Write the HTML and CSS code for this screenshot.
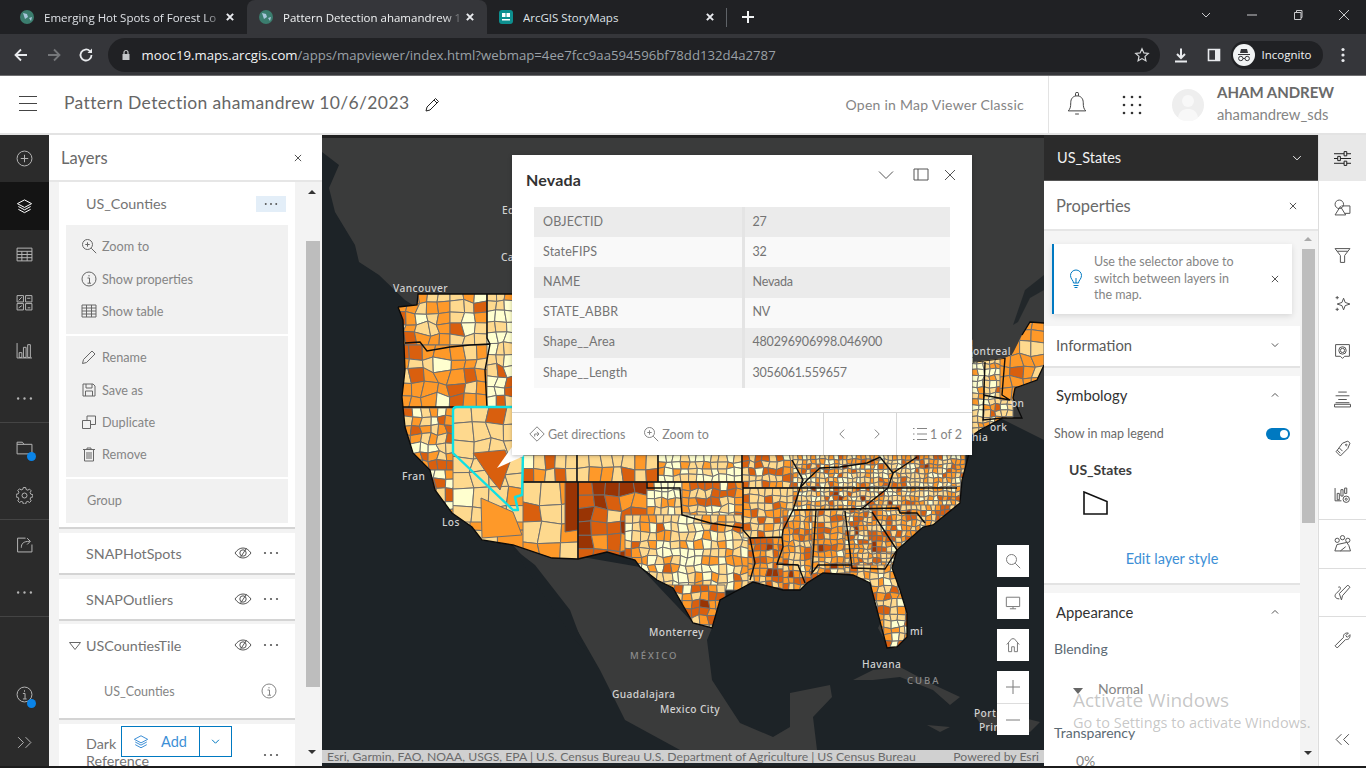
FILE: index.html
```html
<!DOCTYPE html>
<html lang="en">
<head>
  <meta charset="UTF-8">
  <meta name="viewport" content="width=device-width, initial-scale=1">
  <title>Pattern Detection ahamandrew 10/6/2023</title>
  <link rel="stylesheet" href="styles.css">
</head>
<body>
  <!-- Icon sprite -->
  <svg class="sprite" width="0" height="0">
    <symbol id="i-x" viewBox="0 0 16 16"><path d="M3 3l10 10M13 3L3 13"/></symbol>
    <symbol id="i-down" viewBox="0 0 16 16"><path d="M3 5.500l5 5 5-5"/></symbol>
    <symbol id="i-up" viewBox="0 0 16 16"><path d="M3 10.500l5-5 5 5"/></symbol>
    <symbol id="i-dots" viewBox="0 0 16 16"><circle cx="2" cy="8" r="1.100" class="solid"/><circle cx="8" cy="8" r="1.100" class="solid"/><circle cx="14" cy="8" r="1.100" class="solid"/></symbol>
    <symbol id="i-eye" viewBox="0 0 18 16"><path d="M1 8c2.500-3.500 5-5 8-5s5.500 1.500 8 5c-2.500 3.500-5 5-8 5s-5.500-1.500-8-5z"/><circle cx="9" cy="8" r="3.200"/><path d="M12.500 3.200L6 13"/></symbol>
    <symbol id="i-layers" viewBox="0 0 18 18"><path d="M9 2l7.500 4L9 10 1.500 6zM2.500 9L9 12.500 15.500 9M2.500 12L9 15.500l6.500-3.500"/></symbol>
    <symbol id="i-zoom" viewBox="0 0 16 16"><circle cx="6.500" cy="6.500" r="5"/><path d="M4.300 6.500h4.400M6.500 4.300v4.400M10.200 10.200l5 5"/></symbol>
    <symbol id="i-info" viewBox="0 0 16 16"><circle cx="8" cy="8" r="7"/><path d="M6.500 7h2v5M6.500 12.200h3.500M8 4v1.400"/></symbol>
  </svg>

  <!-- Browser chrome -->
  <div class="tabbar">
    <div class="tab tab-first">
      <svg class="favicon" viewBox="0 0 16 16"><circle cx="8" cy="8" r="7" fill="#3b7d6e"/><path d="M4 4l4 1 1 3-3 2zM10 9l3-1-1 4z" fill="#a7c6da"/></svg>
      <span class="tab-text">Emerging Hot Spots of Forest Lo</span>
      <svg class="tab-close icon"><use href="#i-x"/></svg>
    </div>
    <div class="tab tab-active">
      <svg class="favicon" viewBox="0 0 16 16"><circle cx="8" cy="8" r="7" fill="#3b7d6e"/><path d="M4 4l4 1 1 3-3 2zM10 9l3-1-1 4z" fill="#a7c6da"/></svg>
      <span class="tab-text">Pattern Detection ahamandrew 1</span>
      <svg class="tab-close icon"><use href="#i-x"/></svg>
    </div>
    <div class="tab tab-last">
      <svg class="favicon" viewBox="0 0 16 16"><rect x="1" y="1" width="14" height="14" rx="3" fill="#0d8f8f"/><path d="M4 4h3.500v4H4zM8.500 4H12v4H8.500zM4 10h8v1.500H4z" fill="#fff"/></svg>
      <span class="tab-text">ArcGIS StoryMaps</span>
      <svg class="tab-close icon"><use href="#i-x"/></svg>
    </div>
    <svg class="tab-plus" viewBox="0 0 14 14"><path d="M7 1v12M1 7h12"/></svg>
    <div class="win-controls">
      <svg viewBox="0 0 12 12"><path d="M2 4l4 4 4-4"/></svg>
      <svg viewBox="0 0 12 12"><path d="M1 6h10"/></svg>
      <svg viewBox="0 0 12 12"><path d="M2.500 3.500h6.500v7H2.500zM4.500 3.500V1.500h5.500v7H9"/></svg>
      <svg viewBox="0 0 12 12"><path d="M1 1l10 10M11 1L1 11"/></svg>
    </div>
  </div>
  <div class="toolbar">
    <svg class="nav-btn" viewBox="0 0 16 16"><path d="M14 8H2.500M8 2.500L2.500 8 8 13.500"/></svg>
    <svg class="nav-btn nav-dim" viewBox="0 0 16 16"><path d="M2 8h11.500M8 2.500L13.500 8 8 13.500"/></svg>
    <svg class="nav-btn" viewBox="0 0 16 16"><path d="M13.500 8a5.500 5.500 0 1 1-1.600-3.900"/><path class="solid" d="M14 1.500V6H9.500z"/></svg>
    <div class="urlbar">
      <svg class="lock" viewBox="0 0 12 12"><path d="M2.500 5h7v6h-7z" fill="#c4c7c9" stroke="none"/><path d="M4 5V3.500a2 2 0 0 1 4 0V5" fill="none" stroke="#c4c7c9" stroke-width="1.200"/></svg>
      <span class="url"><b>mooc19.maps.arcgis.com</b>/apps/mapviewer/index.html?webmap=4ee7fcc9aa594596bf78dd132d4a2787</span>
      <svg class="star" viewBox="0 0 16 16"><path d="M8 1.800l1.900 4.100 4.400.5-3.300 3 .9 4.400L8 11.600l-3.900 2.200.9-4.400-3.300-3 4.400-.5z"/></svg>
    </div>
    <svg class="tool-btn" viewBox="0 0 16 16"><path d="M8 1.500v9M4 7l4 4 4-4M2 14.500h12" stroke-width="2"/></svg>
    <svg class="tool-btn" viewBox="0 0 16 16"><path d="M2.500 2.500h11v11h-11z" stroke-width="1.600"/><path class="solid" d="M9 2.500h4.500v11H9z"/></svg>
    <div class="incognito">
      <svg viewBox="0 0 22 22"><circle cx="11" cy="11" r="11" fill="#f1f3f4"/><path d="M5 10h12v1H5zM7 9l1-4h6l1 4z" fill="#35363a"/><circle cx="7.800" cy="14.500" r="2.200" fill="none" stroke="#35363a"/><circle cx="14.200" cy="14.500" r="2.200" fill="none" stroke="#35363a"/><path d="M10 14.500h2" stroke="#35363a"/></svg>
      <span>Incognito</span>
    </div>
    <svg class="more-btn" viewBox="0 0 4 16"><circle cx="2" cy="2.500" r="1.600"/><circle cx="2" cy="8" r="1.600"/><circle cx="2" cy="13.500" r="1.600"/></svg>
  </div>

  <!-- App header -->
  <header class="app-header">
    <div class="hamburger"><span></span><span></span><span></span></div>
    <div class="map-title">Pattern Detection ahamandrew 10/6/2023</div>
    <svg class="icon title-pencil" viewBox="0 0 16 16"><path d="M2 14l1-4 8.500-8.500 3 3L6 13zM10 3l3 3"/></svg>
    <a class="classic-link">Open in Map Viewer Classic</a>
    <div class="header-user">
      <svg class="icon bell" viewBox="2 2 16 19"><path d="M3 17c1.500-1.500 2-3 2-6.500C5 7 7 5 10 5s5 2 5 5.500c0 3.500.5 5 2 6.500zM8.800 5V3.300a1.200 1.200 0 0 1 2.400 0V5M8.500 19.500h3"/></svg>
      <svg class="apps" viewBox="0 0 20 20"><g><circle cx="2" cy="2" r="1.300"/><circle cx="10" cy="2" r="1.300"/><circle cx="18" cy="2" r="1.300"/><circle cx="2" cy="10" r="1.300"/><circle cx="10" cy="10" r="1.300"/><circle cx="18" cy="10" r="1.300"/><circle cx="2" cy="18" r="1.300"/><circle cx="10" cy="18" r="1.300"/><circle cx="18" cy="18" r="1.300"/></g></svg>
      <svg class="avatar" viewBox="0 0 32 32"><circle cx="16" cy="16" r="16" fill="#eeeeee"/><circle cx="16" cy="12" r="6" fill="#f8f8f8"/><path d="M6 29c1-7 5-9 10-9s9 2 10 9a16 16 0 0 1-20 0z" fill="#f8f8f8"/></svg>
      <div class="user-names">
        <div class="user-full">AHAM ANDREW</div>
        <div class="user-id">ahamandrew_sds</div>
      </div>
    </div>
  </header>

  <main class="workspace">
    <!-- Left rail -->
    <nav class="rail">
      <div class="rail-item rail-top"><svg class="icon" viewBox="0 0 16 16"><circle cx="8" cy="8" r="7"/><path d="M4.500 8h7M8 4.500v7"/></svg></div>
      <div class="rail-item rail-active"><svg class="icon"><use href="#i-layers"/></svg></div>
      <div class="rail-item"><svg class="icon" viewBox="0 0 16 16"><path d="M1 2h14v12H1zM1 5h14M1 8h14M1 11h14M5.500 5v9M10.500 5v9"/></svg></div>
      <div class="rail-item"><svg class="icon" viewBox="0 0 16 16"><path d="M1 1.500h6v6H1zM9 1.500h6v6H9zM1 9h6v6H1zM9 9h6v6H9zM2.500 6l3-3M10.500 4h3M2.500 13l3-2M11 13h2.500"/></svg></div>
      <div class="rail-item"><svg class="icon" viewBox="0 0 16 16"><path d="M1 1v14h14M3 10h2.500v4.500H3zM7 5h2.500v9.500H7zM11 2.500h2.500v12H11z"/></svg></div>
      <div class="rail-item rail-sep"><svg class="icon"><use href="#i-dots"/></svg></div>
      <div class="rail-item"><svg class="icon" viewBox="0 0 16 16"><path d="M1 3h5l1.500 2H15v9H1zM1 5h6.500"/></svg><i class="rail-dot"></i></div>
      <div class="rail-item rail-sep"><svg class="icon" viewBox="-.5 -.5 17 17"><circle cx="8" cy="8" r="2.500"/><path d="M6.800 0h2.400l.4 2 1.700.7 1.700-1.100 1.700 1.700-1.100 1.700.7 1.700 2 .4v2.400l-2 .4-.7 1.700 1.100 1.700-1.700 1.700-1.700-1.100-1.700.7-.4 2H6.800l-.4-2-1.700-.7-1.700 1.100-1.700-1.700 1.100-1.700-.7-1.700-2-.4V6.800l2-.4.7-1.700-1.100-1.700 1.700-1.700 1.700 1.100 1.700-.7z"/></svg></div>
      <div class="rail-item"><svg class="icon" viewBox="0 0 16 16"><path d="M9 2H1.500v13H15V8M5 11c0-4 2-6 8-6M10.500 2L13.500 5l-3 3"/></svg></div>
      <div class="rail-item rail-sep"><svg class="icon"><use href="#i-dots"/></svg></div>
      <div class="rail-spacer"></div>
      <div class="rail-item"><svg class="icon"><use href="#i-info"/></svg><i class="rail-dot"></i></div>
      <div class="rail-item"><svg class="icon" viewBox="0 0 16 16"><path d="M2 3l5 5-5 5M9 3l5 5-5 5"/></svg></div>
    </nav>

    <!-- Layers panel -->
    <section class="layers-panel">
      <div class="panel-head">
        <h2>Layers</h2>
        <svg class="icon panel-close"><use href="#i-x"/></svg>
      </div>
      <div class="layers-body">
        <div class="layers-list">
          <div class="layer layer-open">
            <div class="layer-row">
              <span class="layer-name">US_Counties</span>
              <span class="dots-btn"><svg class="icon"><use href="#i-dots"/></svg></span>
            </div>
            <div class="menu-group">
              <div class="menu-row"><svg class="icon"><use href="#i-zoom"/></svg>Zoom to</div>
              <div class="menu-row"><svg class="icon"><use href="#i-info"/></svg>Show properties</div>
              <div class="menu-row"><svg class="icon" viewBox="0 0 16 16"><path d="M1 2h14v12H1zM1 5h14M1 8h14M1 11h14M5.500 2v12M10.500 2v12"/></svg>Show table</div>
            </div>
            <div class="menu-group menu-group-2">
              <div class="menu-row"><svg class="icon" viewBox="0 0 16 16"><path d="M1.500 14.500l1-4 8.500-8.500 3 3-8.500 8.500z"/></svg>Rename</div>
              <div class="menu-row"><svg class="icon" viewBox="0 0 16 16"><path d="M2 2h10l2 2v10H2zM5 2v4h6V2M4.500 14V9h7v5"/></svg>Save as</div>
              <div class="menu-row"><svg class="icon" viewBox="0 0 16 16"><path d="M1.500 6.500h8v8h-8zM6 6.500V2h8.500v8.500H9.500"/></svg>Duplicate</div>
              <div class="menu-row"><svg class="icon" viewBox="0 0 16 16"><path d="M2 3.500h12M6 3.500V2h4v1.500M3.500 3.500h9V15h-9zM6 6v7M8 6v7M10 6v7"/></svg>Remove</div>
            </div>
            <div class="menu-group menu-group-3">Group</div>
          </div>
          <div class="layer layer-short">
            <span class="layer-name">SNAPHotSpots</span>
            <svg class="icon eye"><use href="#i-eye"/></svg>
            <svg class="icon dots"><use href="#i-dots"/></svg>
          </div>
          <div class="layer layer-short">
            <span class="layer-name">SNAPOutliers</span>
            <svg class="icon eye"><use href="#i-eye"/></svg>
            <svg class="icon dots"><use href="#i-dots"/></svg>
          </div>
          <div class="layer layer-group">
            <div class="layer-short">
              <svg class="icon caret" viewBox="0 0 14 10"><path d="M1.500 1.500h11L7 8.500z"/></svg>
              <span class="layer-name">USCountiesTile</span>
              <svg class="icon eye"><use href="#i-eye"/></svg>
              <svg class="icon dots"><use href="#i-dots"/></svg>
            </div>
            <div class="sublayer">
              <span>US_Counties</span>
              <svg class="icon"><use href="#i-info"/></svg>
            </div>
          </div>
          <div class="layer layer-last">
            <span class="layer-name">Dark<br>Reference</span>
            <svg class="icon dots"><use href="#i-dots"/></svg>
          </div>
        </div>
        <div class="scrollbar scrollbar-left"><i class="arrow-up"></i><i class="thumb"></i><i class="arrow-down"></i></div>
        <div class="add-btn">
          <span class="add-main"><svg class="icon"><use href="#i-layers"/></svg>Add</span>
          <span class="add-more"><svg class="icon"><use href="#i-down"/></svg></span>
        </div>
      </div>
    </section>

    <!-- Map -->
    <section class="map">
      <svg class="map-svg" viewBox="322 135 722 631" id="mapSvg">
        <defs>
          <clipPath id="usClip"><path id="usShape" d="M398 307L417 305L418 294L512 294L972 310L973 362L1005 358L1012 355L1022 335L1030 322L1044 323L1044 365L1037 380L1015 388L1013 398L1022 418L1003 418L980 430L970 437L970 450L962 480L960 503L933 525L923 527L897 550L892 568L900 590L907 613L907 637L897 647L887 648L877 610L870 583L853 575L823 573L807 583L800 590L783 590L753 582L720 600L712 628L693 623L673 588L657 580L640 567L635 560L607 552L578 559L552 558L513 545L482 540L472 527L452 513L435 490L430 470L413 453L405 427L402 397L405 370L403 320Z"/></clipPath>
        </defs>
        <rect x="322" y="135" width="722" height="631" fill="#1d2327"/>
        <rect x="322" y="135" width="722" height="3" fill="#202020"/>
        <!-- land -->
        <path class="land" d="M322 138L1044 138L1044 440L1000 418L960 440L880 500L820 570L405 300L379 275L359 262L355 245L335 212L329 188L339 165L322 152Z"/>
        <path class="water-inlet" d="M1044 275L1025 290L1013 325L1018 322L1030 298L1044 290Z"/>
        <path class="land" d="M513 545L640 567L693 623L712 628L707 640L712 680L740 723L773 737L790 727L790 693L830 685L832 697L813 717L817 750L680 750L625 720L600 670L560 600Z"/>
        <path class="water" d="M513 548L540 590L575 640L585 650L570 610L535 565Z"/>
        <path class="land" d="M853 680L873 670L900 667L930 683L960 697L950 705L933 690L900 677L873 680ZM927 725L950 727L940 732ZM973 713L1000 712L1040 722L1030 732L985 730ZM883 618L890 630L885 640L878 628Z"/>
        <!-- county choropleth, filled in by map.js -->
        <g id="counties" clip-path="url(#usClip)"></g>
        <!-- state lines -->
        <g class="states" clip-path="url(#usClip)">
          <path d="M405 343L420 342L427 351L450 347L470 345L490 344M487 294L487 338L490 344L485 370L487 408M403 407L512 407"/>
          <path d="M523 482L658 482M577 455L577 482M578 482L578 559M647 482L647 488L680 488L682 515L710 523L743 528M658 455L658 482M658 482L742 482L742 455M743 482L743 530L750 538L755 563L750 580"/>
          <path d="M743 488L800 488L793 510L783 530L782 537L750 538M782 537L783 547L777 564L798 565L805 583M792 460L803 480L800 488M800 488L957 488M793 510L898 508L900 513L917 513L925 523M816 510L812 573L818 565L852 565M845 511L852 568L885 569L897 550M872 512L897 550M888 488L860 510M800 488L807 480L820 468L840 467L867 463L880 457L893 473L888 488M917 457L893 473"/>
          <path d="M973 362L1005 358L1002 395L1010 400M985 362L983 420L1003 418M983 395L1010 400"/>
        </g>
        <path class="us-edge" d="M398 307L417 305L418 294L512 294M1022 335L1030 322L1044 323M1044 365L1037 380L1015 388L1013 398L1022 418L1003 418L980 430L970 437M970 450L962 480L960 503L933 525L923 527L897 550L892 568L900 590L907 613L907 637L897 647L887 648L877 610L870 583L853 575L823 573L807 583L800 590L783 590L753 582L720 600L712 628L693 623L673 588L657 580L640 567L635 560L607 552L578 559L552 558L513 545L482 540L472 527L452 513L435 490L430 470L413 453L405 427L402 397L405 370L403 320L398 307"/>
        <!-- selected state -->
        <path class="selected" d="M512 407L457 407Q453 407 453 411L453 453L513 510L518 510L515 497L522 495L523 453"/>
        <polygon class="popup-tail" points="512,447 524,456 497,468"/>
        <!-- labels -->
        <g class="labels">
          <text x="393" y="292">Vancouver</text>
          <text x="502" y="214">Ed</text>
          <text x="501" y="261">Cal</text>
          <text x="402" y="480">Fran</text>
          <text x="442" y="526">Los</text>
          <text x="649" y="636">Monterrey</text>
          <text x="612" y="698">Guadalajara</text>
          <text x="660" y="713">Mexico City</text>
          <text x="862" y="668">Havana</text>
          <text x="910" y="635">mi</text>
          <text x="974" y="717">Port</text>
          <text x="979" y="731">Prin</text>
          <text x="973" y="355">ontreal</text>
          <text x="1011" y="407">on</text>
          <text x="990" y="431">ork</text>
          <text x="972" y="441">hia</text>
          <text class="dim" x="630" y="659">MÉXICO</text>
          <text class="dim" x="907" y="684">CUBA</text>
        </g>
      </svg>

      <div class="map-tools">
        <div class="map-tool"><svg class="icon" viewBox="0 0 16 16"><circle cx="6.500" cy="6.500" r="5"/><path d="M10.200 10.200l5 5"/></svg></div>
        <div class="map-tool"><svg class="icon" viewBox="0 0 18 16"><path d="M1.500 1.500h15v10.500h-15zM9 12v2.500M5.500 14.500h7"/></svg></div>
        <div class="map-tool"><svg class="icon" viewBox="0 0 16 18"><path d="M1 8.500L6.500 2h3L15 8.500M3 6.500V16.500h3.500V11h3v5.500H13V6.500"/></svg></div>
        <div class="map-zoom">
          <div class="map-tool"><svg class="icon" viewBox="0 0 16 16"><path d="M8 1v14M1 8h14"/></svg></div>
          <div class="map-tool"><svg class="icon" viewBox="0 0 16 16"><path d="M1 8h14"/></svg></div>
        </div>
      </div>

      <!-- Feature popup -->
      <div class="popup">
        <div class="popup-head">
          <h3>Nevada</h3>
          <svg class="icon popup-collapse" viewBox="0 0 16 16"><path d="M1 4.500l7 7 7-7"/></svg>
          <svg class="icon" viewBox="0 0 16 16"><path d="M1 2h14v11H1zM5 2v11"/></svg>
          <svg class="icon"><use href="#i-x"/></svg>
        </div>
        <table class="popup-table">
          <tr><th>OBJECTID</th><td>27</td></tr>
          <tr><th>StateFIPS</th><td>32</td></tr>
          <tr><th>NAME</th><td>Nevada</td></tr>
          <tr><th>STATE_ABBR</th><td>NV</td></tr>
          <tr><th>Shape__Area</th><td>480296906998.046900</td></tr>
          <tr><th>Shape__Length</th><td>3056061.559657</td></tr>
        </table>
        <div class="popup-foot">
          <div class="foot-actions">
            <span><svg class="icon" viewBox="0 0 16 16"><path d="M8 .8L15.200 8 8 15.200.8 8zM5.700 10.500V8h4M8 5.800L10 8l-2 2"/></svg>Get directions</span>
            <span><svg class="icon"><use href="#i-zoom"/></svg>Zoom to</span>
          </div>
          <div class="foot-nav">
            <svg class="icon" viewBox="0 0 16 16"><path d="M10.500 3l-5 5 5 5"/></svg>
            <svg class="icon" viewBox="0 0 16 16"><path d="M5.500 3l5 5-5 5"/></svg>
          </div>
          <div class="foot-count">
            <svg class="icon" viewBox="0 0 16 16"><path d="M5 2.500h10M5 8h10M5 13.500h10M1 2.500h1.500M1 8h1.500M1 13.500h1.500"/></svg>1 of 2
          </div>
        </div>
      </div>

      <div class="attribution">
        <span>Esri, Garmin, FAO, NOAA, USGS, EPA | U.S. Census Bureau U.S. Department of Agriculture | US Census Bureau</span>
        <span>Powered by Esri</span>
      </div>
    </section>

    <!-- Properties panel -->
    <section class="props-panel">
      <div class="layer-picker">
        <span>US_States</span>
        <svg class="icon"><use href="#i-down"/></svg>
      </div>
      <div class="panel-head props-head">
        <h2>Properties</h2>
        <svg class="icon panel-close"><use href="#i-x"/></svg>
      </div>
      <div class="props-body">
        <div class="props-scroll">
          <div class="notice">
            <svg class="icon" viewBox="0 0 16 20"><path d="M5.500 14c0-2.500-3-4-3-7.500a5.500 5.500 0 0 1 11 0c0 3.500-3 5-3 7.500zM5.500 16.500h5M6.500 18.500h3M8 14V9"/></svg>
            <p>Use the selector above to switch between layers in the map.</p>
            <svg class="icon notice-x"><use href="#i-x"/></svg>
          </div>
          <div class="card card-info">
            <div class="card-head"><span class="card-title-soft">Information</span><svg class="icon"><use href="#i-down"/></svg></div>
          </div>
          <div class="card card-symbology">
            <div class="card-head"><span>Symbology</span><svg class="icon"><use href="#i-up"/></svg></div>
            <div class="legend-row"><span>Show in map legend</span><i class="toggle"></i></div>
            <div class="legend-name">US_States</div>
            <svg class="legend-swatch" viewBox="0 0 26 26"><path d="M1 1L24 10.500V23H1z"/></svg>
            <a class="edit-link">Edit layer style</a>
          </div>
          <div class="card card-appearance">
            <div class="card-head"><span>Appearance</span><svg class="icon"><use href="#i-up"/></svg></div>
            <div class="field-label">Blending</div>
            <div class="blend-value"><i class="caret-down"></i>Normal</div>
            <div class="field-label">Transparency</div>
            <div class="transparency">0%</div>
          </div>
        </div>
        <div class="scrollbar scrollbar-right"><i class="arrow-up"></i><i class="thumb"></i><i class="arrow-down"></i></div>
      </div>
    </section>

    <!-- Right rail -->
    <nav class="tools-rail">
      <div class="tool tool-active"><svg class="icon" viewBox="0 0 16 16"><path d="M0 3.500h16M0 8h16M0 12.500h16"/><path class="white" d="M9.500 1.500h2.500v4H9.500zM3.500 6h2.500v4H3.500zM9.500 10.500h2.500v4H9.500z"/></svg></div>
      <div class="tool"><svg class="icon" viewBox="0 0 16 16"><circle cx="5" cy="5" r="4"/><path d="M7 6.500h8v7H10M6 7l5 8H1z"/></svg></div>
      <div class="tool"><svg class="icon" viewBox="0 0 16 16"><path d="M1 1.500h14L10 8v6.500H6V8zM3 4h10"/></svg></div>
      <div class="tool"><svg class="icon" viewBox="0 0 16 16"><path d="M9 3L10.500 7 15 8.500 10.500 10 9 14 7.500 10 3 8.500 7.500 7zM3 1v3M1.500 2.500h3M3 12v3M1.500 13.500h3"/></svg></div>
      <div class="tool"><svg class="icon" viewBox="0 0 16 16"><path d="M1.500 1.500h13v11H10L8 14.500 6 12.500H1.500z"/><circle cx="8" cy="7" r="2"/><circle cx="8" cy="7" r="3.500"/></svg></div>
      <div class="tool"><svg class="icon" viewBox="0 0 16 16"><path d="M4 1h8M1.500 4.500h13M4 8h8M1.500 11h13M.5 12.500h15v2.500H.5z"/></svg></div>
      <div class="tool"><svg class="icon" viewBox="0 0 16 16"><path d="M8 3l5-2 2 2-2 5-7 7-4-4zM3 9.500l3 3M5 7.500l3 3M11.500 4a.7.7 0 1 0 .1 0"/></svg></div>
      <div class="tool tool-sep"><svg class="icon" viewBox="0 0 16 16"><path d="M1 1v12h6M3 6h2v6H3zM6.500 2.500h2v6h-2zM10 1h2v5h-2z"/><circle cx="11.500" cy="11.500" r="3"/><circle cx="11.500" cy="11.500" r="1"/></svg></div>
      <div class="tool tool-sep"><svg class="icon" viewBox="0 0 16 16"><circle cx="3" cy="5" r="2"/><circle cx="8" cy="2.500" r="2"/><circle cx="13" cy="5" r="2"/><path d="M.8 15l2-6L12 7l2 3 1.500 5zM6 15l5-4"/></svg></div>
      <div class="tool tool-sep"><svg class="icon" viewBox="0 0 16 16"><path d="M7 15l1-4 7-8-2-2-8 8zM5 14C1 14 0 11 2 9l3-3C7 4 6 2 4 3"/></svg></div>
      <div class="tool"><svg class="icon" viewBox="0 0 16 16"><path d="M1 13l8-8c-.7-2.500 1.500-4.500 4.500-4L11 3.500l1.500 1.500L15 2.500c.5 3-1.500 5.200-4 4.500l-8 8z"/></svg></div>
      <div class="rail-spacer"></div>
      <div class="tool tool-collapse"><svg class="icon" viewBox="0 0 16 16"><path d="M7 3L2 8l5 5M14 3L9 8l5 5"/></svg></div>
    </nav>
  </main>

  <div class="watermark">
    <div class="wm-title">Activate Windows</div>
    <div class="wm-sub">Go to Settings to activate Windows.</div>
  </div>

  <script src="map.js"></script>
</body>
</html>
```

FILE: styles.css
```css
/* ----- General ----- */
* { box-sizing: border-box; }

html, body {
  margin: 0;
  height: 768px;
  overflow: hidden;
}

body {
  position: relative;
  display: flex;
  flex-direction: column;
  font-family: 'Lato', 'Noto Sans', sans-serif;
  background: #1c1c1c;
  color: #6a6a6a;
}

.sprite { position: absolute; }

.icon {
  width: 16px;
  height: 16px;
  fill: none;
  stroke: currentColor;
  stroke-width: 1;
  flex: none;
}

.icon path, .icon circle, .sprite path, .sprite circle { vector-effect: non-scaling-stroke; }

.solid { fill: currentColor; stroke: none; }

/* ----- Browser chrome ----- */
.tabbar {
  height: 34px;
  background: #202124;
  display: flex;
  color: #dee1e6;
  font-family: 'Open Sans', 'Noto Sans', sans-serif;
  font-size: 11.500px;
}

.tab {
  width: 240px;
  display: flex;
  align-items: center;
  padding: 0 11px 0 11px;
  border-radius: 8px 8px 0 0;
}

.tab-first { width: 247px; padding-left: 19px; }
.tab-active { background: #35363a; color: #f1f3f4; }

.favicon { width: 16px; height: 16px; margin-right: 9px; flex: none; }

.tab-text {
  flex: 1;
  white-space: nowrap;
  overflow: hidden;
  -webkit-mask-image: linear-gradient(to right, #000 88%, transparent);
          mask-image: linear-gradient(to right, #000 88%, transparent);
}

.tab-close { width: 10px; height: 10px; stroke-width: 2; color: #e8eaed; margin-right: 1px; }

.tab-plus {
  width: 14px;
  height: 14px;
  margin: 10px 0 0 14px;
  fill: none;
  stroke: #f1f3f4;
  stroke-width: 2;
}

.tab-last { position: relative; }
.tab-last .tab-text { -webkit-mask-image: none; mask-image: none; }
.tab-last::after {
  content: "";
  position: absolute;
  right: 0;
  top: 8px;
  height: 19px;
  width: 1px;
  background: #5f6368;
}

.win-controls {
  margin-left: auto;
  display: flex;
  align-items: center;
  gap: 34px;
  padding: 0 16px 5px 0;
}

.win-controls svg {
  width: 12px;
  height: 12px;
  fill: none;
  stroke: #c9cacc;
  stroke-width: 1;
}

.toolbar {
  height: 42px;
  background: #35363a;
  display: flex;
  align-items: center;
  padding: 0 0 0 13px;
  border-bottom: 1px solid #6e6e70;
}

.nav-btn {
  width: 16px;
  height: 16px;
  margin-right: 16.500px;
  fill: none;
  stroke: #e8eaed;
  stroke-width: 1.800;
  color: #e8eaed;
}

.nav-dim { stroke: #75777a; }

.urlbar {
  width: 1052px;
  height: 34px;
  margin-left: -3px;
  background: #202124;
  border-radius: 17px;
  display: flex;
  align-items: center;
  padding: 0 10px 0 12px;
  font-family: 'Open Sans', 'Noto Sans', sans-serif;
  font-size: 13.200px;
  color: #9aa0a6;
}

.lock { width: 12px; height: 12px; margin-right: 10px; }
.url { flex: 1; white-space: nowrap; }
.url b { font-weight: 400; color: #f1f3f4; }

.star { width: 16px; height: 16px; fill: none; stroke: #d5d7d9; stroke-width: 1.200; }

.tool-btn {
  width: 16px;
  height: 16px;
  margin-left: 13px;
  fill: none;
  stroke: #e8eaed;
  color: #e8eaed;
}

.tool-btn + .tool-btn { margin-left: 17px; }

.incognito {
  width: 92px;
  height: 28px;
  margin-left: 9px;
  background: #202124;
  border-radius: 14px;
  display: flex;
  align-items: center;
  gap: 7px;
  padding-left: 2px;
  color: #f1f3f4;
  font-family: 'Open Sans', 'Noto Sans', sans-serif;
  font-size: 11.500px;
}

.incognito svg { width: 22px; height: 22px; }

.more-btn { width: 4px; height: 16px; margin-left: 18px; fill: #e8eaed; }

/* ----- App header ----- */
.app-header {
  height: 59px;
  background: #fff;
  display: flex;
  align-items: center;
  border-bottom: 2px solid #e3e3e3;
}

.hamburger {
  width: 18px;
  margin: 0 27px 2px 19px;
  display: flex;
  flex-direction: column;
  gap: 6px;
}

.hamburger span { height: 1px; background: #444; }

.map-title {
  font-size: 17.500px;
  color: #666;
  white-space: nowrap;
  letter-spacing: .36px;
  margin-bottom: 4px;
}

.title-pencil { margin: 0 0 0 15px; color: #222; }

.classic-link {
  margin: 0 24px 0 auto;
  font-size: 14px;
  letter-spacing: .26px;
  color: #858585;
}

.header-user {
  width: 318px;
  height: 57px;
  display: flex;
  align-items: center;
  border-left: 1px solid #e3e3e3;
}

.bell { width: 20px; height: 24px; margin-left: 18px; margin-bottom: 2px; color: #444; }
.apps { width: 20px; height: 20px; margin-left: 35px; fill: #333; }
.avatar { width: 32px; height: 32px; margin-left: 30px; }
.user-names { margin-left: 13px; margin-bottom: 3px; }
.user-full { font-size: 15px; font-weight: 700; color: #6a6a6a; line-height: 22px; }
.user-id { font-size: 14.800px; color: #858585; line-height: 22px; }

/* ----- Workspace ----- */
.workspace {
  height: 631px;
  display: flex;
}

.rail {
  width: 49px;
  background: #2b2b2b;
  display: flex;
  flex-direction: column;
  color: #b4b4b4;
}

.rail-item {
  height: 48px;
  display: flex;
  align-items: center;
  justify-content: center;
  position: relative;
  flex: none;
}

.rail-item .icon { width: 17px; height: 17px; }
.rail-top { height: 47px; }
.rail-active { background: #141414; color: #fff; }
.rail-sep { height: 49px; border-bottom: 1px solid #444; }
.rail-spacer { flex: 1; }

.rail-dot {
  position: absolute;
  left: 27px;
  top: 29px;
  width: 9px;
  height: 9px;
  border-radius: 50%;
  background: #0a84e8;
}

/* ----- Panels ----- */
.panel-head {
  height: 47px;
  background: #fff;
  display: flex;
  align-items: center;
  justify-content: space-between;
  padding: 0 19px 0 12px;
  border-bottom: 2px solid #e6e6e6;
}

.panel-head h2 {
  margin: 0;
  font-size: 16.500px;
  font-weight: 400;
  color: #6a6a6a;
}

.panel-close { width: 10px; height: 10px; color: #555; }

.layers-panel {
  width: 273px;
  display: flex;
  flex-direction: column;
  background: #f3f3f3;
}

.layers-body {
  flex: 1;
  position: relative;
  overflow: hidden;
  padding-left: 10px;
}

.layers-list { width: 236px; display: flex; flex-direction: column; }

.layer {
  background: #fff;
  margin-bottom: 4px;
  border-bottom: 2px solid #d4d4d4;
}

.layer-name { font-size: 14.300px; color: #747474; }

.layer-open { height: 347px; padding: 2px 7px 0; }

.layer-row {
  height: 41px;
  display: flex;
  align-items: center;
  justify-content: space-between;
  padding: 0 2px 2px 20px;
}

.dots-btn {
  width: 30px;
  height: 16px;
  background: #e3eef8;
  display: flex;
  align-items: center;
  justify-content: center;
  color: #555;
}

.dots-btn .icon { width: 14px; height: 14px; }

.menu-group {
  background: #f1f1f1;
  height: 109px;
  margin-bottom: 2px;
  padding-top: 5px;
}

.menu-group-2 { height: 141px; }

.menu-group-3 {
  height: 44px;
  padding: 13px 0 0 21px;
  font-size: 12.700px;
  color: #858585;
}

.menu-row {
  height: 32.400px;
  display: flex;
  align-items: center;
  gap: 5px;
  padding-left: 15px;
  font-size: 12.700px;
  color: #858585;
}

.menu-row .icon { color: #666; }

.layer-short {
  height: 42px;
  display: flex;
  align-items: center;
  padding: 0 16px 0 27px;
  position: relative;
}

.layer-short .layer-name { flex: 1; }
.layer-short .eye { width: 18px; height: 16px; margin-right: 11px; color: #555; }
.layer-short .dots { width: 16px; height: 16px; color: #555; }

.layer-group { height: 96px; margin-top: -1px; }
.layer-group .caret { position: absolute; left: 9px; top: 17px; width: 14px; height: 10px; color: #666; }

.sublayer {
  height: 50px;
  display: flex;
  align-items: center;
  justify-content: space-between;
  padding: 0 18px 0 45px;
  font-size: 12.500px;
  color: #858585;
}

.layer-last {
  height: 60px;
  display: flex;
  align-items: flex-start;
  padding: 11px 16px 0 27px;
  line-height: 17px;
  justify-content: space-between;
  border: 0;
  margin: 0;
}

.layer-last .dots { margin-top: 12px; color: #555; }

.scrollbar {
  position: absolute;
  background: #f3f3f3;
  display: flex;
  flex-direction: column;
  align-items: center;
}

.scrollbar-left { left: 254px; top: 2px; bottom: 4px; width: 17px; }
.scrollbar-left .thumb { position: absolute; top: 57px; left: 3px; width: 14px; height: 446px; background: #bdbdbd; }

.arrow-up, .arrow-down {
  position: absolute;
  width: 0;
  height: 0;
  border-left: 4px solid transparent;
  border-right: 4px solid transparent;
}

.arrow-up { top: 6px; border-bottom: 4px solid #333; left: 5px; }
.arrow-down { bottom: 8px; border-top: 4px solid #333; left: 5px; }

.add-btn {
  position: absolute;
  left: 72px;
  top: 544px;
  width: 111px;
  height: 31px;
  border: 1px solid #0079c1;
  background: #fff;
  display: flex;
  color: #3d8fd6;
  font-size: 14.500px;
}

.add-main {
  width: 78px;
  display: flex;
  align-items: center;
  gap: 12px;
  padding-left: 11px;
  border-right: 1px solid #0079c1;
}

.add-more { flex: 1; display: flex; align-items: center; justify-content: center; }
.add-more .icon { width: 11px; height: 11px; color: #0079c1; }

/* ----- Map ----- */
.map {
  width: 722px;
  position: relative;
  overflow: hidden;
}

.map-svg { position: absolute; inset: 0; width: 722px; height: 631px; display: block; }

.land { fill: #3a3b3b; }
.water { fill: #1d2327; }
.water-inlet { fill: #1d2327; opacity: .8; }
.states path { fill: none; stroke: #0c0c0c; stroke-width: 1.400; }
.us-edge { fill: none; stroke: #0a0a0a; stroke-width: 1.300; }
.selected { fill: none; stroke: #10e0e4; stroke-width: 2.400; stroke-linejoin: round; }
.popup-tail { fill: #fff; }

.labels text {
  font-family: 'Noto Sans', sans-serif;
  font-size: 10.200px;
  font-weight: 500;
  letter-spacing: .4px;
  fill: #d2d2d2;
}

.labels .dim { fill: #8c8c8c; letter-spacing: 2px; font-size: 9.500px; }

.popup {
  position: absolute;
  left: 190px;
  top: 20px;
  width: 460px;
  height: 300px;
  background: #fff;
  display: flex;
  flex-direction: column;
  box-shadow: 0 1px 4px rgba(0,0,0,.25);
}

.popup-head {
  height: 52px;
  display: flex;
  align-items: center;
  padding: 0 14px 12px 14px;
  gap: 13px;
  color: #555;
}

.popup-head h3 {
  flex: 1;
  margin: 8px 0 0;
  font-size: 16px;
  font-weight: 700;
  color: #323232;
  letter-spacing: .2px;
}

.popup-collapse { margin-right: 6px; }

.popup-table {
  width: 416px;
  margin-left: 22px;
  border-collapse: collapse;
  table-layout: fixed;
  font-size: 12.500px;
  color: #747474;
}

.popup-table tr { height: 30.200px; background: #f9f9f9; }
.popup-table tr:nth-child(odd) { background: #ebebeb; }

.popup-table th {
  width: 209px;
  padding: 0 0 2px 9px;
  font-weight: 400;
  letter-spacing: .15px;
  text-align: left;
  border-right: 3px solid #e4e4e4;
}

.popup-table td { padding: 0 0 2px 8px; letter-spacing: -.2px; }

.popup-foot {
  margin-top: auto;
  height: 43px;
  border-top: 1px solid #d6d6d6;
  display: flex;
  font-size: 12.500px;
  color: #858585;
}

.foot-actions {
  flex: 1;
  display: flex;
  align-items: center;
  gap: 18px;
  padding-left: 17px;
}

.foot-actions span { display: flex; align-items: center; gap: 3px; }

.foot-nav {
  width: 74px;
  display: flex;
  align-items: center;
  justify-content: space-between;
  padding: 0 12px 0 11px;
  border-left: 1px solid #d6d6d6;
  border-right: 1px solid #d6d6d6;
}

.foot-nav .icon { width: 14px; height: 14px; }

.foot-count {
  width: 75px;
  display: flex;
  align-items: center;
  gap: 2px;
  padding-left: 15px;
}

.map-tools {
  position: absolute;
  right: 15px;
  top: 410px;
  display: flex;
  flex-direction: column;
  gap: 10px;
  color: #7c7c7c;
}

.map-tool {
  width: 32px;
  height: 32px;
  background: #fff;
  display: flex;
  align-items: center;
  justify-content: center;
}

.map-zoom .map-tool + .map-tool { border-top: 1px solid #ddd; }

.attribution {
  position: absolute;
  left: 0;
  right: 0;
  top: 615px;
  height: 13px;
  background: #d0d0d0;
  display: flex;
  justify-content: space-between;
  padding: 0 5px;
  font-size: 12.200px;
  line-height: 13px;
  color: #6a6a6a;
  white-space: nowrap;
  overflow: hidden;
}

/* ----- Properties panel ----- */
.props-panel {
  width: 274px;
  display: flex;
  flex-direction: column;
  background: #f5f5f5;
}

.layer-picker {
  height: 46px;
  background: #2b2b2b;
  color: #f0f0f0;
  display: flex;
  align-items: center;
  justify-content: space-between;
  padding: 0 15px 0 13px;
  font-size: 14.500px;
  border-bottom: 1px solid #555;
}

.layer-picker .icon { width: 12px; height: 12px; }

.props-head { height: 50px; padding: 2px 20px 0 12px; }

.props-body { flex: 1; position: relative; overflow: hidden; }
.props-scroll { width: 256px; padding-top: 13px; }

.notice {
  width: 240px;
  height: 70px;
  margin-left: 8px;
  background: #fff;
  border-left: 2px solid #0079c1;
  box-shadow: 0 2px 6px rgba(0,0,0,.12);
  display: flex;
  align-items: center;
  font-size: 12.500px;
  line-height: 16.500px;
  color: #858585;
}

.notice > .icon:first-child { margin: 0 10px 0 14px; color: #0079c1; height: 20px; }
.notice p { margin: 0; width: 142px; }
.notice-x { width: 10px; height: 10px; margin-left: auto; margin-right: 12px; color: #555; }

.card {
  background: #fff;
  border-bottom: 2px solid #e3e3e3;
  margin-bottom: 8px;
}

.card-info { margin-top: 12px; height: 42px; }
.card-symbology { height: 209px; display: flex; flex-direction: column; }

.card-head {
  height: 38px;
  display: flex;
  align-items: center;
  justify-content: space-between;
  padding: 0 20px 0 12px;
  font-size: 14.800px;
  color: #323232;
}

.card-title-soft { color: #5a5a5a; }
.card-head .icon { width: 10px; height: 10px; color: #555; }

.legend-row {
  display: flex;
  align-items: center;
  justify-content: space-between;
  padding: 12px 10px 0 10px;
  font-size: 12.500px;
  color: #6a6a6a;
}

.toggle {
  position: relative;
  width: 24px;
  height: 12px;
  border-radius: 6px;
  background: #0079c1;
}

.toggle::after {
  content: "";
  position: absolute;
  right: 2px;
  top: 2px;
  width: 8px;
  height: 8px;
  border-radius: 50%;
  background: #fff;
}

.legend-name {
  margin: 20px 0 0 25px;
  font-size: 14px;
  font-weight: 700;
  color: #3c3c3c;
}

.legend-swatch {
  width: 26px;
  height: 26px;
  margin: 13px 0 0 39px;
  fill: #fff;
  stroke: #111;
  stroke-width: 1.600;
}

.edit-link {
  margin-top: 33px;
  text-align: center;
  font-size: 14.500px;
  color: #3d8fd6;
}

.card-appearance { height: 200px; border: 0; margin: 0; }

.field-label {
  margin: 9px 0 0 10px;
  font-size: 14px;
  color: #5c6a74;
}

.blend-value {
  height: 52px;
  padding: 23px 0 0 54px;
  font-size: 14px;
  color: #858585;
  position: relative;
  margin-bottom: 15px;
}

.caret-down {
  position: absolute;
  left: 29px;
  top: 31px;
  border-left: 5px solid transparent;
  border-right: 5px solid transparent;
  border-top: 6px solid #666;
}

.transparency { margin: 11px 0 0 32px; font-size: 14px; color: #858585; }

.scrollbar-right { left: 256px; top: 0; bottom: 0; width: 17px; background: #f3f3f3; }
.scrollbar-right .thumb { position: absolute; top: 18px; left: 2px; width: 13px; height: 274px; background: #bdbdbd; }
.scrollbar-right .arrow-up { border-bottom-color: #aaa; left: 4px; }
.scrollbar-right .arrow-down { left: 4px; bottom: 11px; }

/* ----- Right rail ----- */
.tools-rail {
  flex: 1;
  background: #fff;
  border-left: 1px solid #ddd;
  display: flex;
  flex-direction: column;
  color: #555;
}

.tool {
  height: 48.200px;
  flex: none;
  display: flex;
  align-items: center;
  justify-content: center;
}

.tool .icon { width: 17px; height: 17px; }
.tool-active { background: #e8e8e8; height: 46px; margin-bottom: 2px; color: #222; }
.tool-active .white { fill: #e8e8e8; }
.tool-sep { border-bottom: 1px solid #ddd; }
.tool-collapse { margin-bottom: 2px; }

/* ----- Windows watermark ----- */
.watermark {
  position: absolute;
  left: 1073px;
  top: 687px;
  color: rgba(130,130,130,.45);
  font-family: 'Open Sans', 'Noto Sans', sans-serif;
  pointer-events: none;
  white-space: nowrap;
}

.wm-title { font-size: 19px; line-height: 26px; }
.wm-sub { font-size: 14.500px; line-height: 20px; }
```

FILE: map.js
```js
// Fake county layer: jittered grids inside rough state boxes, clipped to the US outline
const PALETTE = ['#ffffcf', '#fed98e', '#fe9929', '#d95f0e', '#993404'];

// x0, y0, x1, y1, cell size, colour weights
const REGIONS = [
  [395, 290, 450, 345, 12, [.08, .2, .5, .22, 0]],
  [450, 290, 487, 345, 12, [.1, .3, .25, .35, 0]],
  [395, 345, 490, 408, 14, [.03, .1, .6, .27, 0]],
  [487, 290, 515, 408, 11, [.5, .3, .12, .08, 0]],
  [395, 408, 455, 470, 9, [.2, .2, .4, .2, 0]],
  [425, 470, 475, 530, 10, [.25, .2, .25, .3, 0]],
  [470, 510, 525, 550, 24, [.1, .3, .5, .1, 0]],
  [453, 407, 525, 522, 17, [.05, .85, .08, .02, 0]],
  [523, 455, 577, 482, 11, [.15, .5, .2, .15, 0]],
  [523, 482, 578, 562, 20, [0, .72, .23, .05, 0]],
  [577, 455, 658, 482, 11, [.05, .45, .2, .3, 0]],
  [578, 482, 647, 562, 14, [0, .05, .07, .38, .5]],
  [658, 455, 742, 482, 7.500, [.55, .3, .15, 0, 0]],
  [647, 482, 682, 515, 7.500, [.55, .22, .2, .03, 0]],
  [682, 482, 743, 528, 8, [.08, .3, .34, .28, 0]],
  [625, 515, 757, 590, 8, [.28, .42, .25, .05, 0]],
  [650, 585, 725, 632, 8, [.05, .2, .3, .38, .07]],
  [742, 455, 803, 488, 6.500, [.04, .3, .36, .3, 0]],
  [743, 488, 795, 538, 7, [.06, .5, .32, .12, 0]],
  [748, 538, 810, 595, 6.500, [0, .18, .42, .34, .06]],
  [783, 510, 816, 590, 6, [.08, .3, .37, .22, .03]],
  [812, 510, 850, 580, 6, [.05, .3, .35, .27, .03]],
  [845, 508, 900, 572, 4.500, [.12, .35, .3, .2, .03]],
  [793, 455, 965, 510, 4.500, [.2, .38, .26, .14, .02]],
  [872, 505, 965, 552, 5, [.08, .4, .33, .17, .02]],
  [850, 565, 912, 655, 7, [.12, .35, .38, .15, 0]],
  [972, 340, 1013, 440, 6, [.3, .45, .2, .05, 0]],
  [1000, 320, 1044, 400, 11, [.02, .15, .65, .18, 0]]
];

// Small seeded generator so the picture stays the same on every load
let seed = 20231006;
function rand() {
  seed = (seed * 1664525 + 1013904223) % 4294967296;
  return seed / 4294967296;
}

function pickColor(weights) {
  let r = rand();
  for (let i = 0; i < weights.length; i++) {
    r -= weights[i];
    if (r <= 0) return PALETTE[i];
  }
  return PALETTE[1];
}

function drawRegion(group, [x0, y0, x1, y1, size, weights]) {
  const nx = Math.max(1, Math.round((x1 - x0) / size));
  const ny = Math.max(1, Math.round((y1 - y0) / size));
  const pts = [];
  for (let j = 0; j <= ny; j++) {
    pts[j] = [];
    for (let i = 0; i <= nx; i++) {
      const inner = i > 0 && i < nx && j > 0 && j < ny;
      const jx = inner ? (rand() - .5) * size * .45 : 0;
      const jy = inner ? (rand() - .5) * size * .45 : 0;
      pts[j][i] = [x0 + i * (x1 - x0) / nx + jx, y0 + j * (y1 - y0) / ny + jy];
    }
  }
  let html = '';
  for (let j = 0; j < ny; j++) {
    for (let i = 0; i < nx; i++) {
      const p = [pts[j][i], pts[j][i + 1], pts[j + 1][i + 1], pts[j + 1][i]];
      const d = p.map(q => q[0].toFixed(1) + ',' + q[1].toFixed(1)).join(' ');
      html += `<polygon points="${d}" fill="${pickColor(weights)}"/>`;
    }
  }
  group.insertAdjacentHTML('beforeend', html);
}

const counties = document.getElementById('counties');
counties.setAttribute('stroke', '#6f6f6f');
counties.setAttribute('stroke-width', '1');
REGIONS.forEach(r => drawRegion(counties, r));

// A few counties that stand out in the west
counties.insertAdjacentHTML('beforeend', `
  <polygon points="473,453 505,450 510,462 500,490 490,478" fill="#d95f0e"/>
  <polygon points="565,482 578,482 578,530 565,532" fill="#993404"/>
  <polygon points="481,498 513,512 522,535 482,538" fill="#fe9929"/>
`);
```
